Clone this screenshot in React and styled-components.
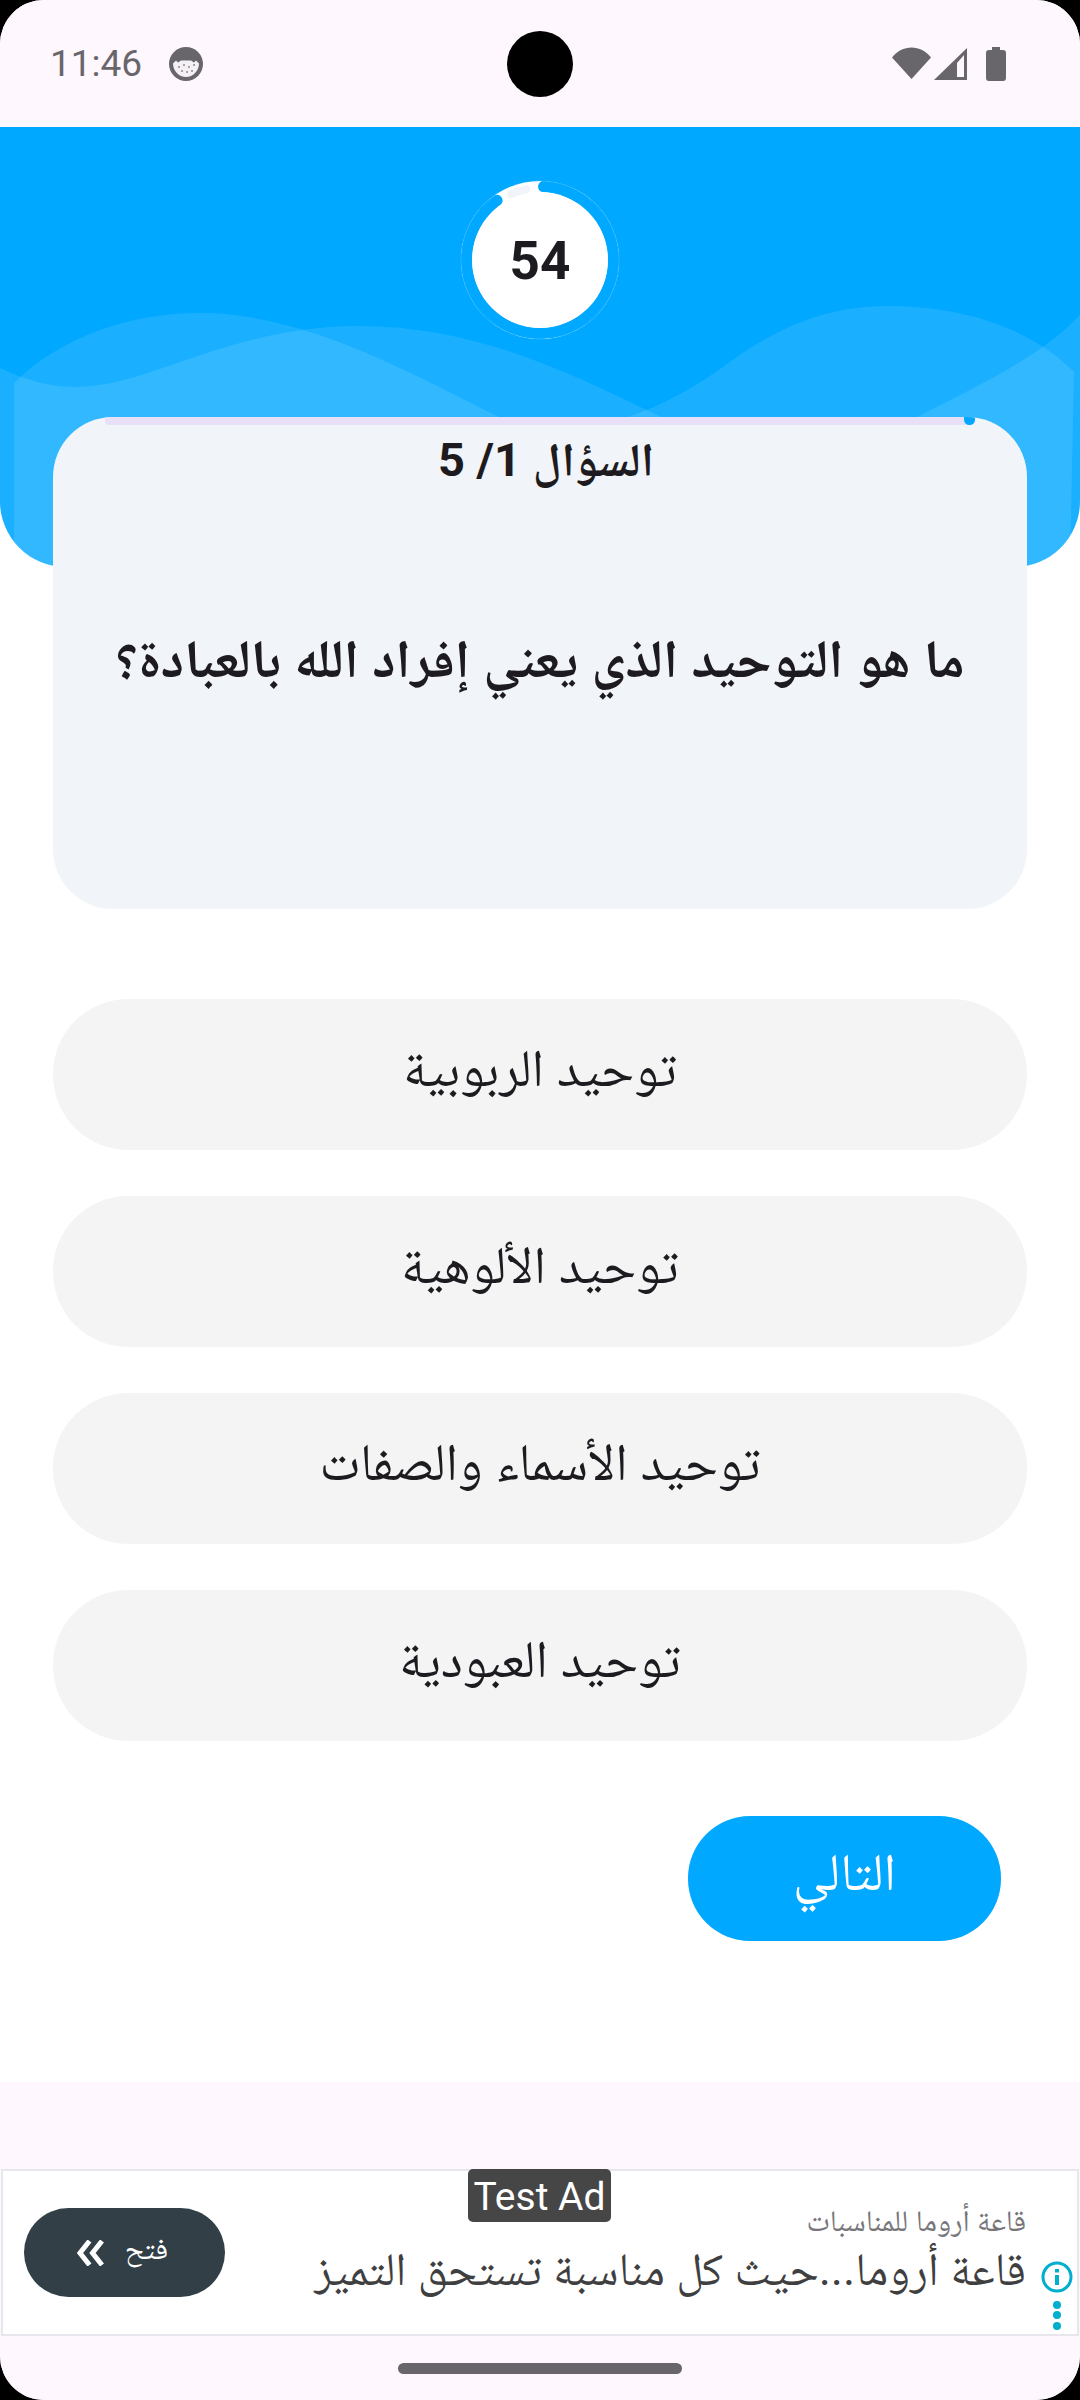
import React from 'react';
import styled, { createGlobalStyle } from 'styled-components';

const GlobalStyle = createGlobalStyle`
  html, body { margin: 0; padding: 0; background: #000; }
  * { box-sizing: border-box; }
`;

const Screen = styled.div`
  position: relative;
  width: 1080px;
  height: 2400px;
  overflow: hidden;
  display: flex;
  flex-direction: column;
  background: #fff;
  border-radius: 44px;
  font-family: Roboto, 'Noto Naskh Arabic', sans-serif;
  color: #1d1b20;
`;

const StatusBar = styled.div`
  height: 127px;
  flex: none;
  display: flex;
  align-items: center;
  justify-content: space-between;
  padding: 0 74px 0 50px;
  background: #fff7fe;
  color: #69666b;
`;

const StatusLeft = styled.div`
  display: flex;
  align-items: center;
  gap: 27px;
`;

const Clock = styled.span`
  font: 400 37px Roboto, sans-serif;
`;

const StatusRight = styled.div`
  display: flex;
  align-items: center;
  gap: 3px;
`;

const BatteryIcon = styled.svg`
  margin-left: 16px;
`;

const Camera = styled.div`
  position: absolute;
  left: 507px;
  top: 31px;
  width: 66px;
  height: 66px;
  border-radius: 50%;
  background: #000;
`;

const Header = styled.div`
  position: relative;
  height: 440px;
  flex: none;
  overflow: hidden;
  background: #00a8ff;
  border-radius: 0 0 66px 66px;
`;

const Waves = styled.svg`
  position: absolute;
  left: 0;
  top: 0;
`;

const Timer = styled.div`
  position: absolute;
  left: 460px;
  top: 53px;
  width: 160px;
  height: 160px;
`;

const TimerRing = styled.svg`
  position: absolute;
  inset: 0;
`;

const TimerValue = styled.span`
  position: absolute;
  inset: 0;
  padding-top: 2px;
  display: flex;
  align-items: center;
  justify-content: center;
  font: 700 53px Roboto, sans-serif;
  color: #1d1b20;
`;

const Body = styled.div`
  flex: 1;
  display: flex;
  flex-direction: column;
  padding: 0 53px;
  margin-top: -150px;
  position: relative;
`;

const QuestionCard = styled.div`
  position: relative;
  height: 492px;
  overflow: hidden;
  display: flex;
  flex-direction: column;
  align-items: center;
  background: #f1f4f8;
  border-radius: 60px;
`;

const ProgressTrack = styled.div`
  height: 8px;
  width: 870px;
  flex: none;
  position: relative;
  background: #e8dff8;
  border-radius: 0 0 4px 4px;
`;

const ProgressDot = styled.span`
  position: absolute;
  right: 0;
  top: 0;
  width: 11px;
  height: 8px;
  border-radius: 0 0 6px 6px;
  background: #00a8ff;
`;

const QuestionCount = styled.div`
  margin-top: 5px;
  padding-left: 12px;
  font-size: 47px;
  font-weight: 700;
  line-height: 60px;
`;

const QuestionText = styled.div`
  margin-top: 133px;
  font-size: 53.5px;
  font-weight: 700;
  line-height: 72px;
  white-space: nowrap;
`;

const Options = styled.div`
  display: flex;
  flex-direction: column;
  gap: 46px;
  margin-top: 90px;
`;

const Option = styled.div`
  height: 151px;
  display: flex;
  align-items: center;
  justify-content: center;
  background: #f4f4f4;
  border-radius: 75px;
  font-size: 52.5px;
`;

const NextRow = styled.div`
  display: flex;
  justify-content: flex-end;
  margin-top: 75px;
  padding-right: 26px;
`;

const NextButton = styled.div`
  width: 313px;
  height: 125px;
  display: flex;
  align-items: center;
  justify-content: center;
  background: #00a8ff;
  border-radius: 62px;
  color: #fff;
  font-size: 52.5px;
`;

const BottomBar = styled.div`
  height: 318px;
  flex: none;
  padding-top: 87px;
  background: #fff7fe;
  position: relative;
`;

const Ad = styled.div`
  position: relative;
  height: 167px;
  margin: 0 1px;
  background: #fff;
  border: 2px solid #e6e6ec;
`;

const TestBadge = styled.div`
  position: absolute;
  left: 465px;
  top: -2px;
  width: 143px;
  height: 53px;
  padding-top: 3px;
  display: flex;
  align-items: center;
  justify-content: center;
  background: #464646;
  border-radius: 5px;
  color: #fff;
  font: 400 39px Roboto, sans-serif;
`;

const OpenButton = styled.div`
  position: absolute;
  left: 21px;
  top: 37px;
  width: 201px;
  height: 89px;
  padding-right: 4px;
  display: flex;
  align-items: center;
  justify-content: center;
  gap: 20px;
  background: #323f47;
  border-radius: 45px;
  color: #fff;
  font-size: 30px;
`;

const AdCopy = styled.div`
  position: absolute;
  right: 51px;
  top: 32px;
  display: flex;
  flex-direction: column;
  align-items: flex-start;
  white-space: nowrap;
`;

const AdName = styled.div`
  font-size: 30px;
  line-height: 36px;
  color: #77767a;
`;

const AdLine = styled.div`
  font-size: 46.4px;
  line-height: 60px;
  color: #3f3f42;
`;

const AdInfo = styled.svg`
  position: absolute;
  right: 4px;
  top: 90px;
`;

const HomeBar = styled.div`
  position: absolute;
  left: 398px;
  top: 281px;
  width: 284px;
  height: 11px;
  border-radius: 6px;
  background: #69666b;
`;

const cx = 80;
const polar = (deg, r) => {
  const a = ((deg - 90) * Math.PI) / 180;
  return `${cx + r * Math.cos(a)} ${cx + r * Math.sin(a)}`;
};

function CatIcon() {
  return (
    <svg width="34" height="34" viewBox="0 0 34 34">
      <circle cx="17" cy="17" r="17" fill="currentColor" />
      <path d="M4 16.5l3-3 2 2 3-2h10l3 2 2-2 3 3C30 24 24 30 17 30S4 24 4 16.5Z" fill="#f4f0f4" />
      <g fill="#8d8a8e">
        <circle cx="10" cy="20" r="1" />
        <circle cx="15" cy="18" r="1" />
        <circle cx="20" cy="20" r="1" />
        <circle cx="25" cy="18" r="1" />
        <circle cx="13" cy="24" r="1" />
        <circle cx="18" cy="25" r="1" />
        <circle cx="23" cy="24" r="1" />
      </g>
    </svg>
  );
}

function StatusIcons() {
  return (
    <StatusRight>
      <svg width="39" height="34" viewBox="0 0 39 34">
        <path d="M19.5 32 0 10.500C5 4 12 0.500 19.500 0.500S34 4 39 10.500Z" fill="currentColor" />
      </svg>
      <svg width="33" height="34" viewBox="0 0 33 34">
        <path fillRule="evenodd" d="M33 1v32H0ZM23 16v14h7V8Z" fill="currentColor" />
      </svg>
      <BatteryIcon width="20" height="34" viewBox="0 0 20 34">
        <path d="M6 0h8v3h3a3 3 0 0 1 3 3v25a3 3 0 0 1-3 3H3a3 3 0 0 1-3-3V6a3 3 0 0 1 3-3h3Z" fill="currentColor" />
      </BatteryIcon>
    </StatusRight>
  );
}

export default function App() {
  return (
    <>
      <GlobalStyle />
      <Screen>
        <StatusBar>
          <StatusLeft>
            <Clock>11:46</Clock>
            <CatIcon />
          </StatusLeft>
          <StatusIcons />
        </StatusBar>
        <Camera />
        <Header>
          <Waves width="1080" height="440" viewBox="0 0 1080 440">
            <path
              d="M14 256C60 210 130 186 200 186C300 186 400 240 499 290C560 330 800 340 917 290C985 255 1040 230 1080 188V440H14Z"
              fill="#fff"
              fillOpacity="0.1"
            />
            <path
              d="M0 241C25 253 50 260 76 260C150 260 230 199 358 199C470 199 560 240 661 290V440H0Z"
              fill="#fff"
              fillOpacity="0.1"
            />
            <path
              d="M560 300C610 300 660 285 723 240C770 205 820 179 888 179C960 179 1030 200 1074 245L1070 440H560Z"
              fill="#fff"
              fillOpacity="0.1"
            />
          </Waves>
          <Timer>
            <TimerRing width="160" height="160" viewBox="0 0 160 160">
              <circle cx="80" cy="80" r="79" fill="#fff" />
              <path
                d={`M${polar(3, 73.5)}A73.5 73.5 0 1 1 ${polar(-36, 73.5)}`}
                fill="none"
                stroke="#00a8ff"
                strokeWidth="11.5"
                strokeLinecap="round"
              />
              <circle cx="80" cy="80" r="79" fill="none" stroke="#fff" strokeOpacity="0.15" strokeWidth="1" />
              <path
                d={`M${polar(-24, 72)}A72 72 0 0 1 ${polar(-11, 72)}`}
                fill="none"
                stroke="#f1f4f8"
                strokeWidth="8"
                strokeLinecap="round"
              />
              <circle cx="80" cy="80" r="68" fill="#fff" />
            </TimerRing>
            <TimerValue>54</TimerValue>
          </Timer>
        </Header>
        <Body>
          <QuestionCard>
            <ProgressTrack>
              <ProgressDot />
            </ProgressTrack>
            <QuestionCount dir="rtl">السؤال 1/ 5</QuestionCount>
            <QuestionText dir="rtl">ما هو التوحيد الذي يعني إفراد الله بالعبادة؟</QuestionText>
          </QuestionCard>
          <Options>
            <Option dir="rtl">توحيد الربوبية</Option>
            <Option dir="rtl">توحيد الألوهية</Option>
            <Option dir="rtl">توحيد الأسماء والصفات</Option>
            <Option dir="rtl">توحيد العبودية</Option>
          </Options>
          <NextRow>
            <NextButton dir="rtl">التالي</NextButton>
          </NextRow>
        </Body>
        <BottomBar>
          <Ad>
            <OpenButton>
              <svg width="28" height="26" viewBox="0 0 28 26">
                <path d="M12.500 1 3 13l9.500 12M25 1 15.500 13 25 25" fill="none" stroke="#fff" strokeWidth="5" />
              </svg>
              <span dir="rtl">فتح</span>
            </OpenButton>
            <TestBadge>Test Ad</TestBadge>
            <AdCopy dir="rtl">
              <AdName>قاعة أروما للمناسبات</AdName>
              <AdLine>قاعة أروما...حيث كل مناسبة تستحق التميز</AdLine>
            </AdCopy>
            <AdInfo width="32" height="74" viewBox="0 0 32 74">
              <circle cx="16" cy="16" r="14" fill="none" stroke="#00aecd" strokeWidth="3" />
              <rect x="14" y="14" width="4" height="10" fill="#00aecd" />
              <rect x="14" y="8" width="4" height="3.500" fill="#00aecd" />
              <circle cx="16" cy="44" r="4" fill="#00aecd" />
              <circle cx="16" cy="54" r="4" fill="#00aecd" />
              <circle cx="16" cy="65" r="4" fill="#00aecd" />
            </AdInfo>
          </Ad>
          <HomeBar />
        </BottomBar>
      </Screen>
    </>
  );
}
